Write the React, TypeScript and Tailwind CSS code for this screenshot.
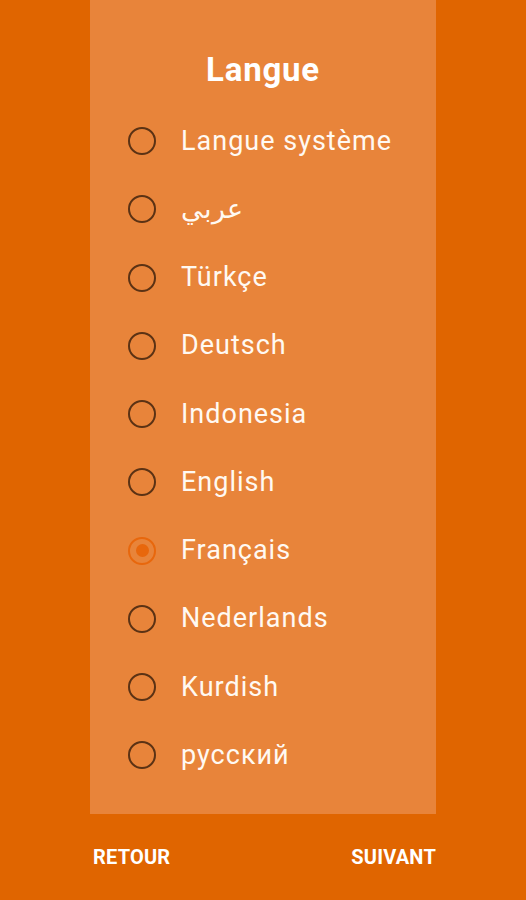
import { useState } from 'react'

const LANGS = [
  'Langue système',
  'عربي',
  'Türkçe',
  'Deutsch',
  'Indonesia',
  'English',
  'Français',
  'Nederlands',
  'Kurdish',
  'русский',
]

function Radio({ checked }: { checked: boolean }) {
  if (checked) {
    return (
      <span className="flex h-[28px] w-[28px] shrink-0 items-center justify-center rounded-full border-[2.5px] border-[#e8670c]">
        <span className="h-[13px] w-[13px] rounded-full bg-[#e8670c]" />
      </span>
    )
  }
  return <span className="h-[28px] w-[28px] shrink-0 rounded-full border-[2.5px] border-[#5b3214]" />
}

export default function App() {
  const [selected, setSelected] = useState('Français')

  return (
    <div
      className="flex h-[900px] w-[526px] flex-col bg-[#e06500] text-white"
      style={{ fontFamily: 'Roboto, "Noto Sans", sans-serif' }}
    >
      {/* Dialog panel */}
      <div className="mx-[90px] flex h-[814px] flex-col bg-[#e8843a]">
        <h1 className="pt-[51px] text-center text-[33px] font-bold leading-[38px] tracking-[0.8px]">Langue</h1>
        <ul className="mt-[18px] flex flex-col">
          {LANGS.map(lang => (
            <li
              key={lang}
              onClick={() => setSelected(lang)}
              className="flex h-[68.25px] cursor-pointer items-center gap-[25px] pl-[38px]"
            >
              <Radio checked={selected === lang} />
              <span className="text-[27px] leading-none tracking-[1px] text-[#fff9f2]">{lang}</span>
            </li>
          ))}
        </ul>
      </div>

      {/* Bottom buttons */}
      <div className="flex flex-1 items-center justify-between pl-[93px] pr-[90px]">
        <button className="text-[20px] font-bold tracking-[0.2px]">RETOUR</button>
        <button className="text-[20px] font-bold tracking-[0.2px]">SUIVANT</button>
      </div>
    </div>
  )
}
